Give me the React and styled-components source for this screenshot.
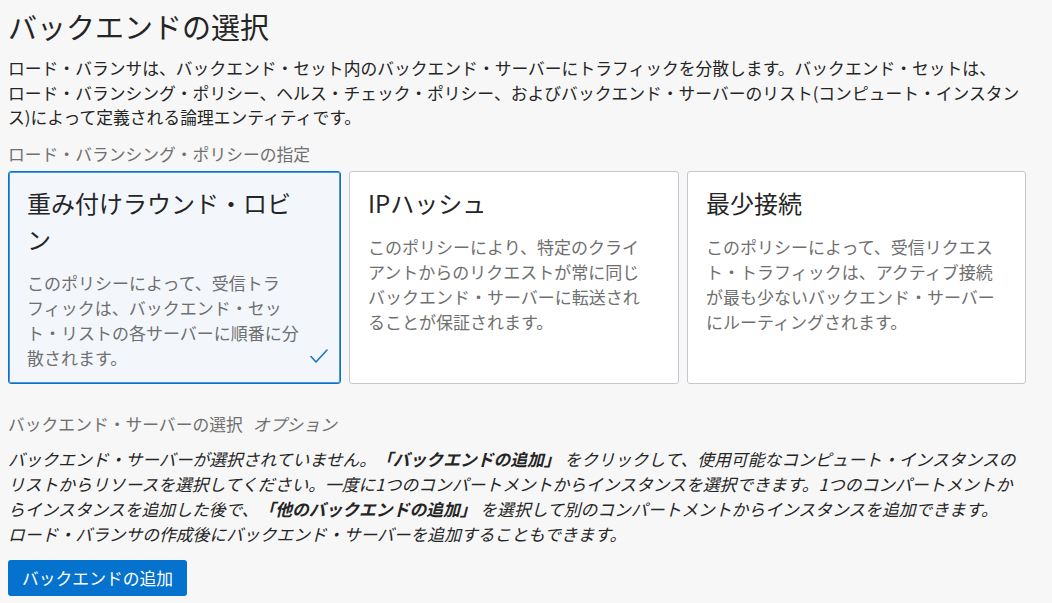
import React from "react";
import styled, { createGlobalStyle } from "styled-components";

const GlobalStyle = createGlobalStyle`
  html, body {
    margin: 0;
    padding: 0;
    background: #f7f7f7;
  }
  body {
    font-family: "Noto Sans CJK JP", "Noto Sans", sans-serif;
    color: #252525;
    text-spacing-trim: space-all;
  }
`;

const Page = styled.div`
  padding: 8px 26px 8px 8px;
`;

const Title = styled.h1`
  margin: 0;
  font-size: 29px;
  line-height: 36px;
  font-weight: 400;
  color: #252525;
`;

const Intro = styled.p`
  margin: 12px 0 0;
  font-size: 16.8px;
  line-height: 24.5px;
  color: #252525;
  white-space: nowrap;
`;

const SectionLabel = styled.div`
  margin-top: ${(p) => p.$gap}px;
  font-size: 16.8px;
  line-height: 24.5px;
  color: #707070;
  white-space: nowrap;
`;

const Optional = styled.span`
  font-style: italic;
  margin-left: 10px;
`;

const CardGrid = styled.div`
  margin-top: 4.5px;
  display: grid;
  grid-template-columns: 333px 330px 339px;
  column-gap: 8px;
`;

const Card = styled.div`
  position: relative;
  box-sizing: border-box;
  border: 1px solid ${(p) => (p.$selected ? "#0572ce" : "#c4c7cc")};
  box-shadow: ${(p) => (p.$selected ? "inset 0 0 0 1px #4f95dc" : "none")};
  border-radius: 3px;
  background: ${(p) => (p.$selected ? "#f3f7fc" : "#ffffff")};
  padding: 13px 20px 13px 18px;
`;

const CardTitle = styled.div`
  font-size: 24px;
  line-height: 36px;
  color: #252525;
  white-space: nowrap;
`;

const CardDesc = styled.div`
  margin-top: 13px;
  font-size: 17px;
  line-height: 25px;
  color: #6f6f6f;
`;

const Line = styled.span`
  display: block;
  white-space: nowrap;
`;

const Check = styled.svg`
  position: absolute;
  right: 12px;
  bottom: 19px;
  width: 18px;
  height: 15px;
`;

const Body = styled.p`
  margin: 11px 0 0;
  font-size: 16.8px;
  line-height: 25px;
  font-style: italic;
  color: #252525;
`;

const Strong = styled.b`
  font-weight: 700;
`;

const PrimaryButton = styled.button`
  margin-top: 12.5px;
  height: 36px;
  padding: 0 14px;
  border: none;
  border-radius: 3px;
  background: #0572ce;
  color: #ffffff;
  font-family: "Noto Sans CJK JP", "Noto Sans", sans-serif;
  font-size: 16.8px;
  line-height: 36px;
  cursor: pointer;
  display: block;
`;

const policies = [
  {
    key: "wrr",
    title: ["重み付けラウンド・ロビ", "ン"],
    desc: [
      "このポリシーによって、受信トラ",
      "フィックは、バックエンド・セッ",
      "ト・リストの各サーバーに順番に分",
      "散されます。",
    ],
    selected: true,
  },
  {
    key: "ip",
    title: ["IPハッシュ"],
    desc: [
      "このポリシーにより、特定のクライ",
      "アントからのリクエストが常に同じ",
      "バックエンド・サーバーに転送され",
      "ることが保証されます。",
    ],
  },
  {
    key: "lc",
    title: ["最少接続"],
    desc: [
      "このポリシーによって、受信リクエス",
      "ト・トラフィックは、アクティブ接続",
      "が最も少ないバックエンド・サーバー",
      "にルーティングされます。",
    ],
  },
];

export default function App() {
  return (
    <>
      <GlobalStyle />
      <Page>
        <Title>バックエンドの選択</Title>
        <Intro>
          ロード・バランサは、バックエンド・セット内のバックエンド・サーバーにトラフィックを分散します。バックエンド・セットは、
          <br />
          ロード・バランシング・ポリシー、ヘルス・チェック・ポリシー、およびバックエンド・サーバーのリスト(コンピュート・インスタン
          <br />
          ス)によって定義される論理エンティティです。
        </Intro>

        <SectionLabel $gap={12.5}>ロード・バランシング・ポリシーの指定</SectionLabel>

        <CardGrid>
          {policies.map((p) => (
            <Card key={p.key} $selected={p.selected}>
              <CardTitle>
                {p.title.map((t) => (
                  <Line key={t}>{t}</Line>
                ))}
              </CardTitle>
              <CardDesc>
                {p.desc.map((d) => (
                  <Line key={d}>{d}</Line>
                ))}
              </CardDesc>
              {p.selected && (
                <Check viewBox="0 0 18 15" fill="none">
                  <polyline
                    points="1,7.5 6,13 17,1"
                    stroke="#1a73cc"
                    strokeWidth="1.6"
                    strokeLinecap="round"
                    strokeLinejoin="round"
                  />
                </Check>
              )}
            </Card>
          ))}
        </CardGrid>

        <SectionLabel $gap={27.5}>
          バックエンド・サーバーの選択<Optional>オプション</Optional>
        </SectionLabel>

        <Body>
          <Line>
            バックエンド・サーバーが選択されていません。
            <Strong>「バックエンドの追加」</Strong> をクリックして、使用可能なコンピュート・インスタンスの
          </Line>
          <Line>
            リストからリソースを選択してください。一度に1つのコンパートメントからインスタンスを選択できます。1つのコンパートメントか
          </Line>
          <Line>
            らインスタンスを追加した後で、<Strong>「他のバックエンドの追加」</Strong> を選択して別のコンパートメントからインスタンスを追加できます。
          </Line>
          <Line>ロード・バランサの作成後にバックエンド・サーバーを追加することもできます。</Line>
        </Body>

        <PrimaryButton type="button">バックエンドの追加</PrimaryButton>
      </Page>
    </>
  );
}
